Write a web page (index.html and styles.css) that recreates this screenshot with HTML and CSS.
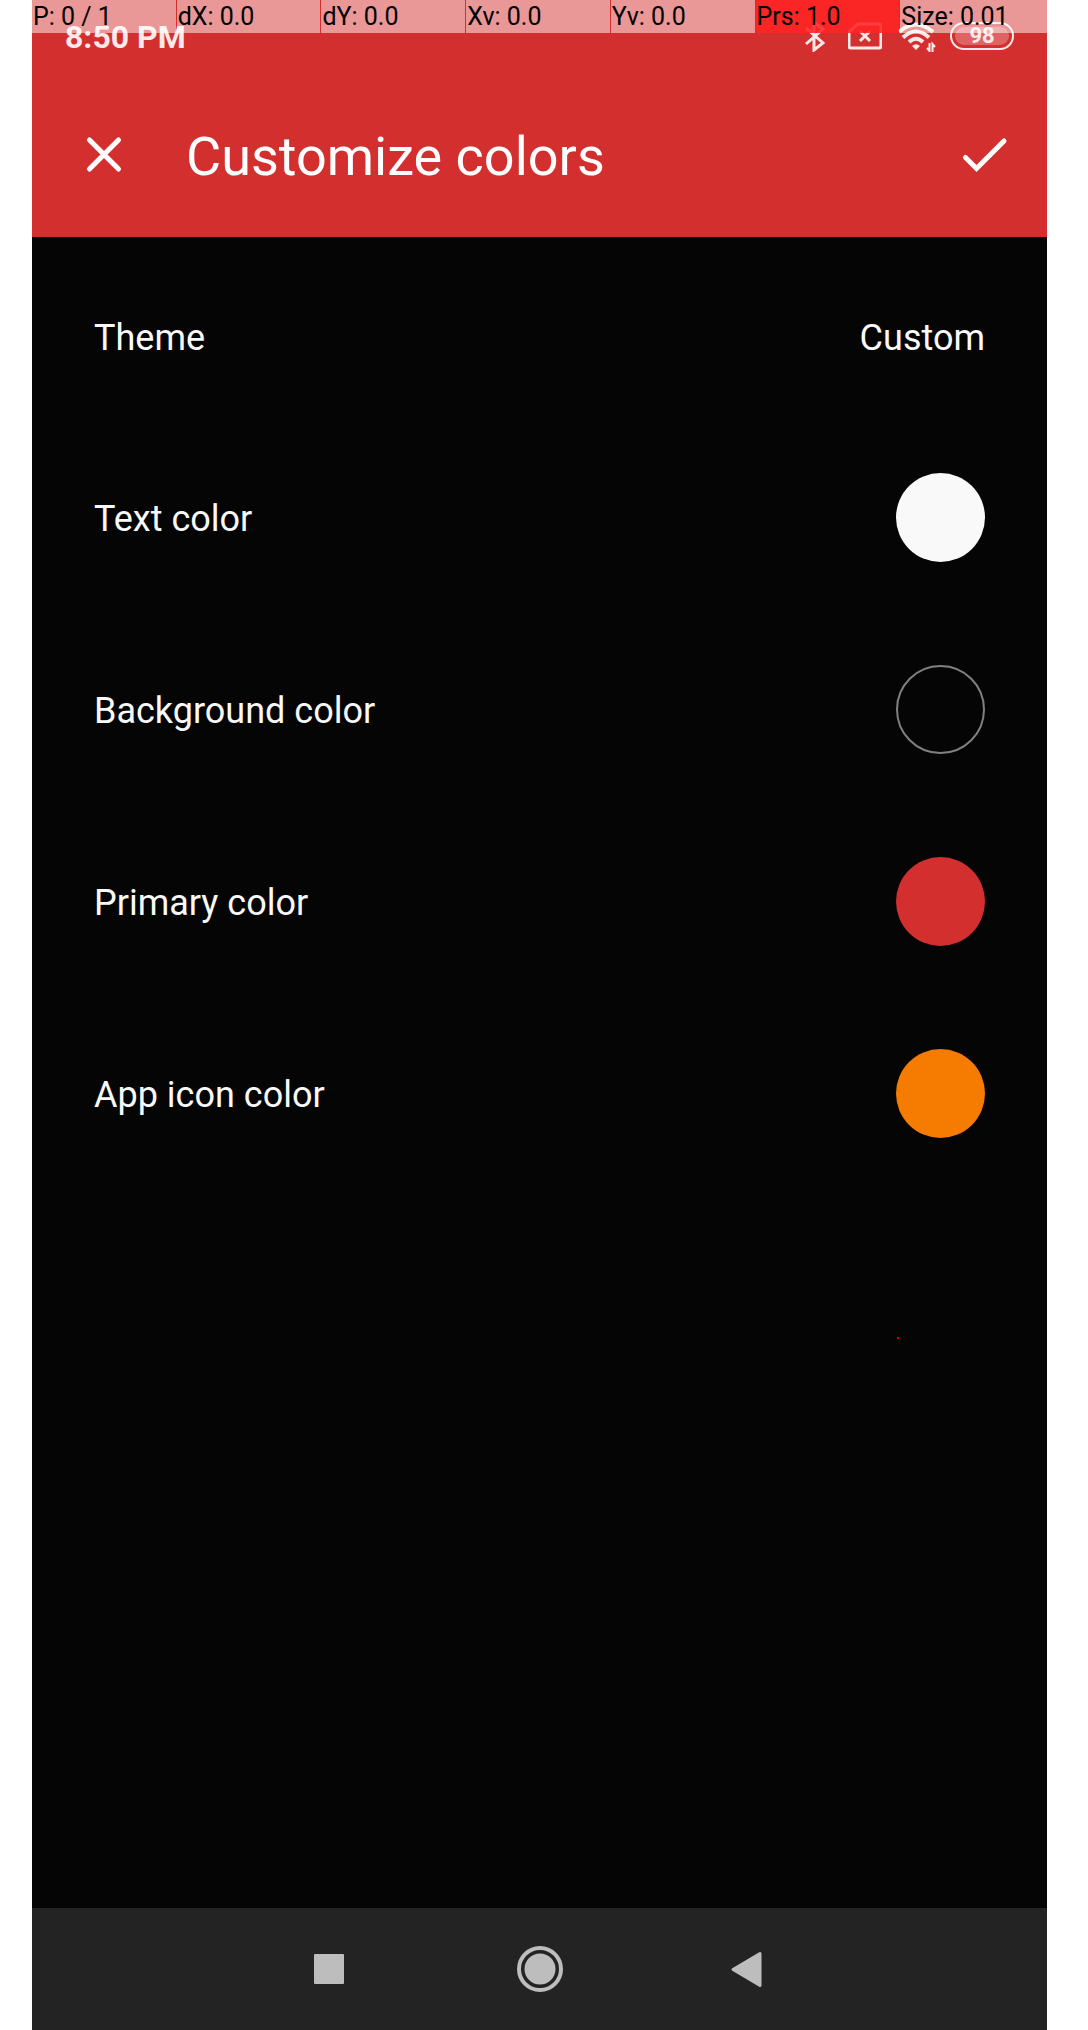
FILE: index.html
```html
<!DOCTYPE html>
<html lang="en">
<head>
<meta charset="utf-8">
<meta name="viewport" content="width=device-width, initial-scale=1">
<title>Customize colors</title>
<link rel="stylesheet" href="styles.css">
</head>
<body>
<div class="screen">
  <header class="header">
    <div class="status">
      <span class="time">8:50 PM</span>
      <div class="status-icons">
        <svg class="bluetooth" width="20" height="32" viewBox="0 0 20 32" aria-hidden="true"><path d="M1 8 L18 23 L9 30 V2 L18 9 L1 24"/></svg>
        <svg class="sim" width="34" height="32" viewBox="0 0 34 32" aria-hidden="true"><path d="M10 4 H31 Q33 4 33 6 V26 Q33 28 31 28 H3 Q1 28 1 26 V12 Z M12 11 L22 21 M22 11 L12 21"/></svg>
        <svg class="wifi" width="40" height="32" viewBox="0 0 40 32" aria-hidden="true"><path class="arc" d="M2 12 Q19 -3 36 12 M6 17.500 Q19 5.500 32 17.500 M12 22 Q19 15.500 26 22"/><path class="dot" d="M15 26 Q19 22.500 23 26 L19 30 Z"/><path class="arrows" d="M32.500 23 V31 L30 28 M35.500 32 V24 L38 27"/></svg>
        <span class="battery"><span class="charge">98</span></span>
      </div>
    </div>
    <div class="toolbar">
      <button class="icon-button" type="button" aria-label="Close"><svg width="40" height="40" viewBox="0 0 40 40"><path d="M5.500 5 L34.500 34 M34.500 5 L5.500 34"/></svg></button>
      <h1 class="title">Customize colors</h1>
      <button class="icon-button" type="button" aria-label="Save"><svg width="48" height="40" viewBox="0 0 48 40"><path d="M4.500 22.500 L15.500 33.500 L43 6"/></svg></button>
    </div>
  </header>
  <main class="settings">
    <button class="row row-theme" type="button"><span class="label">Theme</span><span class="label">Custom</span></button>
    <button class="row" type="button"><span class="label">Text color</span><span class="swatch swatch-text"></span></button>
    <button class="row" type="button"><span class="label">Background color</span><span class="swatch swatch-background"></span></button>
    <button class="row" type="button"><span class="label">Primary color</span><span class="swatch swatch-primary"></span></button>
    <button class="row" type="button"><span class="label">App icon color</span><span class="swatch swatch-icon"></span></button>
    <span class="touch-point"></span>
  </main>
  <nav class="navigation" aria-label="System">
    <button class="nav-button" type="button" aria-label="Recent apps"><svg width="50" height="50" viewBox="0 0 50 50"><rect x="8" y="10" width="30" height="30" rx="1"/></svg></button>
    <button class="nav-button" type="button" aria-label="Home"><svg width="50" height="50" viewBox="0 0 50 50"><circle cx="25" cy="25" r="15.500"/><circle class="ring" cx="25" cy="25" r="21"/></svg></button>
    <button class="nav-button" type="button" aria-label="Back"><svg width="50" height="50" viewBox="0 0 50 50"><path class="back" d="M9 25.500 L36 9.500 V41.500 Z"/></svg></button>
  </nav>
  <div class="pointer-info">
    <span>P: 0 / 1</span>
    <span>dX: 0.0</span>
    <span>dY: 0.0</span>
    <span>Xv: 0.0</span>
    <span>Yv: 0.0</span>
    <span class="pressed">Prs: 1.0</span>
    <span>Size: 0.01</span>
  </div>
</div>
</body>
</html>
```
FILE: styles.css
```css
* {
  box-sizing: border-box;
}

body {
  margin: 0;
  padding: 0 41px 0 32px;
  background: #fff;
  font-family: Roboto, "Liberation Sans", sans-serif;
}

button {
  margin: 0;
  padding: 0;
  border: 0;
  background: none;
  color: inherit;
  font: inherit;
}

.screen {
  position: relative;
  display: flex;
  flex-direction: column;
  min-height: 100vh;
  background: #050505;
}

.header {
  background: #d32f2f;
  color: #fff;
}

.status {
  display: flex;
  align-items: center;
  justify-content: space-between;
  height: 72px;
  padding: 0 33px;
  color: #fbe9e9;
}

.time {
  padding-top: 2px;
  font-size: 32px;
  font-weight: 700;
}

.status-icons {
  display: flex;
  align-items: center;
}

.status-icons svg {
  fill: none;
  stroke: #fbe9e9;
  stroke-width: 3;
}

.bluetooth {
  margin-right: 23px;
}

.sim {
  margin-right: 15px;
}

.wifi {
  margin-right: 13px;
}

.status-icons .arc {
  stroke-width: 4;
}

.status-icons .dot {
  fill: #fbe9e9;
  stroke: none;
}

.status-icons .arrows {
  stroke-width: 2;
}

.battery {
  display: flex;
  width: 64px;
  height: 28px;
  padding: 3px;
  border: 2px solid #fbe9e9;
  border-radius: 14px;
}

.charge {
  flex: 1;
  border-radius: 9px;
  background: rgba(255, 255, 255, 0.25);
  font-size: 22px;
  font-weight: 700;
  line-height: 18px;
  text-align: center;
}

.toolbar {
  display: flex;
  align-items: center;
  height: 165px;
  padding: 0 38px 0 52px;
}

.icon-button {
  display: flex;
}

.icon-button svg {
  fill: none;
  stroke: #fff;
  stroke-width: 5;
  stroke-linecap: round;
}

.title {
  flex: 1;
  margin: 0 0 0 62px;
  padding-top: 4px;
  font-size: 54px;
  font-weight: 400;
  line-height: 64px;
}

.settings {
  position: relative;
  display: flex;
  flex: 1;
  flex-direction: column;
  padding-top: 14px;
  color: #f9f9f9;
  font-size: 36px;
}

.row {
  display: flex;
  align-items: center;
  justify-content: space-between;
  height: 192px;
  padding: 0 62px;
}

.row-theme {
  height: 170px;
}

.label {
  padding-top: 3px;
}

.swatch {
  width: 89px;
  height: 89px;
  border-radius: 50%;
}

.swatch-text {
  background: #f9f9f9;
}

.swatch-background {
  border: 2px solid #808080;
}

.swatch-primary {
  background: #d32f2f;
}

.swatch-icon {
  background: #f57c00;
}

.touch-point {
  position: absolute;
  top: 1100px;
  right: 148px;
  width: 2px;
  height: 2px;
  background: #d00010;
}

.navigation {
  display: flex;
  align-items: center;
  justify-content: center;
  gap: 159px;
  height: 122px;
  background: #232323;
}

.nav-button {
  display: flex;
}

.nav-button svg {
  fill: #bdbdbd;
}

.nav-button .ring {
  fill: none;
  stroke: #bdbdbd;
  stroke-width: 4;
}

.nav-button .back {
  stroke: #bdbdbd;
  stroke-width: 3;
  stroke-linejoin: round;
}

.pointer-info {
  position: absolute;
  top: 0;
  right: 0;
  left: 0;
  display: grid;
  grid-template-columns: repeat(6, 144fr) 147fr;
  gap: 1px;
  color: #000;
  font-size: 25px;
  line-height: 32px;
}

.pointer-info span {
  padding: 1px 0 0 1px;
  background: rgba(255, 255, 255, 0.5);
  white-space: nowrap;
}

.pointer-info .pressed {
  background: rgba(255, 36, 36, 0.88);
}
```
